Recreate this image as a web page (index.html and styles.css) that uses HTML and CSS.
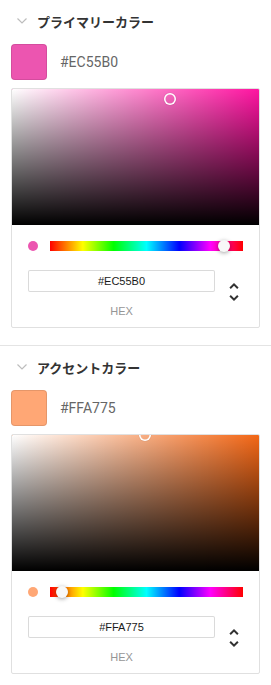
FILE: index.html
```html
<!DOCTYPE html>
<html lang="ja">
<head>
<meta charset="utf-8">
<link rel="stylesheet" href="styles.css">
</head>
<body>
<section class="section">
  <div class="header">
    <svg class="chev" width="10" height="6" viewBox="0 0 10 6"><path d="M0.5 0.5 L5 5 L9.5 0.5" fill="none" stroke="#bdbdbd" stroke-width="1.2"/></svg>
    <span class="title">プライマリーカラー</span>
  </div>
  <div class="current">
    <div class="swatch" style="background:#EC55B0"></div>
    <span class="hex-label">#EC55B0</span>
  </div>
  <div class="picker">
    <div class="sat" style="background-color:hsl(324,100%,54%)">
      <div class="sat-white"></div>
      <div class="sat-black"></div>
      <div class="sat-pointer" style="left:64%;top:7.5%"></div>
    </div>
    <div class="body">
      <div class="controls">
        <div class="dot" style="background:#EC55B0"></div>
        <div class="hue"><div class="hue-pointer" style="left:90%"></div></div>
      </div>
      <div class="fields">
        <div class="field">
          <input class="input" type="text" value="#EC55B0">
          <div class="label">hex</div>
        </div>
        <div class="toggle">
          <svg width="24" height="24" viewBox="0 0 24 24"><path fill="#333" d="M12,18.17L8.83,15L7.42,16.41L12,21L16.59,16.41L15.17,15M12,5.83L15.17,9L16.59,7.59L12,3L7.41,7.59L8.83,9L12,5.83Z"/></svg>
        </div>
      </div>
    </div>
  </div>
</section>
<section class="section">
  <div class="header">
    <svg class="chev" width="10" height="6" viewBox="0 0 10 6"><path d="M0.5 0.5 L5 5 L9.5 0.5" fill="none" stroke="#bdbdbd" stroke-width="1.2"/></svg>
    <span class="title">アクセントカラー</span>
  </div>
  <div class="current">
    <div class="swatch" style="background:#FFA775"></div>
    <span class="hex-label">#FFA775</span>
  </div>
  <div class="picker">
    <div class="sat" style="background-color:hsl(22,90%,52%)">
      <div class="sat-white"></div>
      <div class="sat-black"></div>
      <div class="sat-pointer" style="left:54%;top:0%"></div>
    </div>
    <div class="body">
      <div class="controls">
        <div class="dot" style="background:#FFA775"></div>
        <div class="hue"><div class="hue-pointer" style="left:6%"></div></div>
      </div>
      <div class="fields">
        <div class="field">
          <input class="input" type="text" value="#FFA775">
          <div class="label">hex</div>
        </div>
        <div class="toggle">
          <svg width="24" height="24" viewBox="0 0 24 24"><path fill="#333" d="M12,18.17L8.83,15L7.42,16.41L12,21L16.59,16.41L15.17,15M12,5.83L15.17,9L16.59,7.59L12,3L7.41,7.59L8.83,9L12,5.83Z"/></svg>
        </div>
      </div>
    </div>
  </div>
</section>
</body>
</html>
```

FILE: styles.css
```css
* { box-sizing: border-box; }
html, body { margin: 0; padding: 0; background: #fff; }
body { font-family: Roboto, "Noto Sans CJK JP", sans-serif; width: 271px; }

.section {
  padding: 9px 11px 17px;
  border-bottom: 1px solid #e4e4e4;
}
.section:last-child { border-bottom: none; }

.header {
  display: flex;
  align-items: center;
  height: 24px;
  margin-bottom: 11px;
}
.chev { margin-left: 6px; margin-right: 10px; flex: none; }
.title {
  font-family: "Noto Sans CJK JP", sans-serif;
  font-weight: 700;
  font-size: 13px;
  color: #333;
}

.current {
  display: flex;
  align-items: center;
  height: 36px;
  margin-bottom: 8px;
}
.swatch {
  width: 36px;
  height: 36px;
  border-radius: 4px;
  box-shadow: inset 0 0 0 1px rgba(0,0,0,0.1);
}
.hex-label {
  margin-left: 13px;
  font-size: 14px;
  color: #666;
}

.picker {
  border: 1px solid #e0e0e0;
  border-radius: 2px;
  background: #fff;
  overflow: hidden;
}
.sat {
  position: relative;
  height: 136px;
  overflow: hidden;
}
.sat-white {
  position: absolute; inset: 0;
  background: linear-gradient(to right, #fff, rgba(255,255,255,0));
}
.sat-black {
  position: absolute; inset: 0;
  background: linear-gradient(to top, #000, rgba(0,0,0,0));
}
.sat-pointer {
  position: absolute;
  width: 12px; height: 12px;
  border-radius: 50%;
  transform: translate(-6px, -6px);
  box-shadow: inset 0 0 0 1.5px #fff, 0 0 1px rgba(0,0,0,0.3);
}

.body { padding: 16px 16px 10px; }
.controls {
  display: flex;
  align-items: center;
  height: 10px;
}
.dot {
  width: 10px; height: 10px;
  border-radius: 50%;
  margin-right: 12px;
  flex: none;
}
.hue {
  position: relative;
  flex: 1;
  height: 10px;
  background: linear-gradient(to right, #f00 0%, #ff0 17%, #0f0 33%, #0ff 50%, #00f 67%, #f0f 83%, #f00 100%);
}
.hue-pointer {
  position: absolute;
  top: 0;
  width: 12px; height: 12px;
  border-radius: 50%;
  background: #f8f8f8;
  transform: translate(-6px, -1px);
  box-shadow: 0 1px 4px rgba(0,0,0,0.37);
}

.fields {
  display: flex;
  margin-top: 19px;
}
.field { flex: 1; }
.input {
  display: block;
  width: 100%;
  height: 22px;
  border: none;
  border-radius: 2px;
  box-shadow: inset 0 0 0 1px #dadada;
  font-family: "Liberation Sans", Arial, sans-serif;
  font-size: 11px;
  color: #1a1a1a;
  text-align: center;
  padding: 0;
  outline: none;
}
.label {
  margin-top: 14px;
  font-family: "Liberation Sans", Arial, sans-serif;
  font-size: 11px;
  line-height: 11px;
  color: #969696;
  text-align: center;
  text-transform: uppercase;
}
.toggle {
  width: 28px;
  display: flex;
  justify-content: flex-end;
  align-items: flex-start;
}
.toggle svg { margin-top: 10px; margin-right: -3px; }
```
